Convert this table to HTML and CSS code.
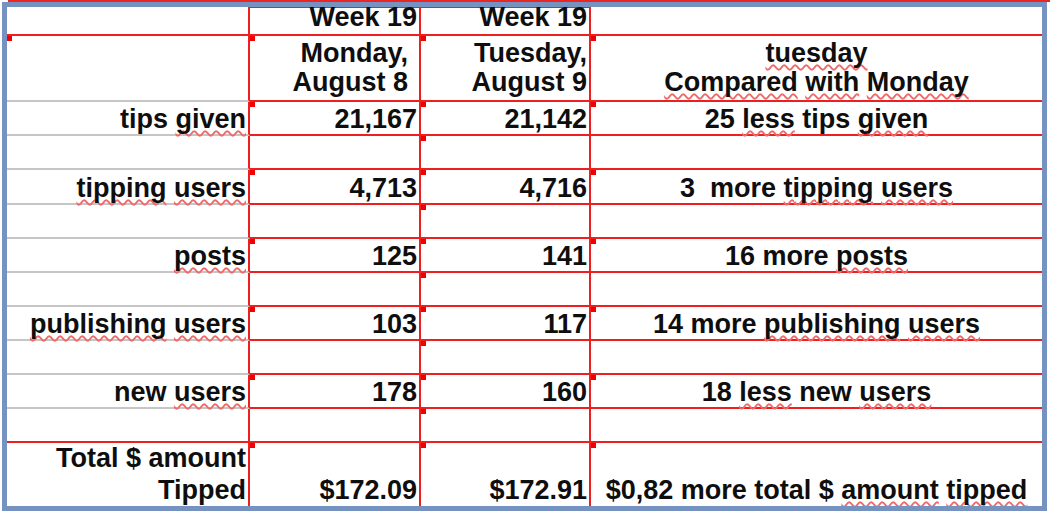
FILE: index.html
```html
<!DOCTYPE html>
<html>
<head>
<meta charset="utf-8">
<link rel="stylesheet" href="styles.css">
</head>
<body>
<div class="top-edge"></div>
<div class="frame">
  <div class="grid">
    <!-- row 1 -->
    <div class="c a red r1"></div>
    <div class="c t r1">Week 19</div>
    <div class="c t r1">Week 19</div>
    <div class="c d r1"></div>
    <!-- row 2 -->
    <div class="c a m r2"></div>
    <div class="c m r2 trail">Monday,<br>August 8</div>
    <div class="c m r2">Tuesday,<br>August 9</div>
    <div class="c d m r2"><span class="sp">tuesday</span><span><span class="sp">Compared</span> <span class="sp">with</span> <span class="sp">Monday</span></span></div>
    <!-- row 3 -->
    <div class="c a"><span>tips <span class="sp">given</span></span></div>
    <div class="c m">21,167</div>
    <div class="c m">21,142</div>
    <div class="c d m"><span>25 <span class="sp">less</span> tips <span class="sp">given</span></span></div>
    <!-- row 4 -->
    <div class="c a"></div>
    <div class="c"></div>
    <div class="c m"></div>
    <div class="c d"></div>
    <!-- row 5 -->
    <div class="c a"><span><span class="sp">tipping</span> <span class="sp">users</span></span></div>
    <div class="c m">4,713</div>
    <div class="c m">4,716</div>
    <div class="c d m"><span>3&nbsp; more <span class="sp">tipping</span> <span class="sp">users</span></span></div>
    <!-- row 6 -->
    <div class="c a"></div>
    <div class="c"></div>
    <div class="c m"></div>
    <div class="c d"></div>
    <!-- row 7 -->
    <div class="c a"><span class="sp">posts</span></div>
    <div class="c m">125</div>
    <div class="c m">141</div>
    <div class="c d m"><span>16 more <span class="sp">posts</span></span></div>
    <!-- row 8 -->
    <div class="c a"></div>
    <div class="c"></div>
    <div class="c m"></div>
    <div class="c d"></div>
    <!-- row 9 -->
    <div class="c a"><span><span class="sp">publishing</span> <span class="sp">users</span></span></div>
    <div class="c m">103</div>
    <div class="c m">117</div>
    <div class="c d m"><span>14 more <span class="sp">publishing</span> <span class="sp">users</span></span></div>
    <!-- row 10 -->
    <div class="c a"></div>
    <div class="c"></div>
    <div class="c m"></div>
    <div class="c d"></div>
    <!-- row 11 -->
    <div class="c a"><span>new <span class="sp">users</span></span></div>
    <div class="c m">178</div>
    <div class="c m">160</div>
    <div class="c d m"><span>18 <span class="sp">less</span> new <span class="sp">users</span></span></div>
    <!-- row 12 -->
    <div class="c a red"></div>
    <div class="c"></div>
    <div class="c m"></div>
    <div class="c d"></div>
    <!-- row 13 -->
    <div class="c a red last"><span>Total $ amount</span><span>Tipped</span></div>
    <div class="c m last">$172.09</div>
    <div class="c m last">$172.91</div>
    <div class="c d m last"><span>$0,82 more total $ <span class="sp">amount</span> <span class="sp">tipped</span></span></div>
  </div>
</div>
</body>
</html>
```

FILE: styles.css
```css
html, body {
  margin: 0;
  padding: 0;
  background: #ffffff;
}

body {
  font-family: "Liberation Sans", Arial, sans-serif;
  width: 1050px;
  height: 511px;
  overflow: hidden;
}

.top-edge {
  height: 2px;
  margin-left: 8px;
  background: #ec2424;
}

.frame {
  margin-left: 2px;
  width: 1035px;
  height: 499px;
  border: 5px solid #7592c0;
  overflow: hidden;
}

.grid {
  display: grid;
  grid-template-columns: 243px 171px 170px 451px;
  grid-template-rows: 29px 66px 34px 34px 35px 34px 34px 34px 34px 34px 34px 34px 68px;
}

.c {
  position: relative;
  box-sizing: border-box;
  display: flex;
  flex-direction: column;
  justify-content: flex-end;
  align-items: flex-end;
  text-align: right;
  padding: 0 2px 0 0;
  border-right: 2px solid #ee1f1f;
  border-bottom: 2px solid #ee1f1f;
  font-size: 27px;
  font-weight: bold;
  line-height: 29px;
  color: #0e0e0e;
  white-space: nowrap;
}

.r1 {
  padding-bottom: 2px;
}

.r2 {
  padding-bottom: 3px;
}

.trail {
  padding-right: 11px;
}

.a {
  border-bottom-color: #c6c6c6;
}

.a.red {
  border-bottom-color: #ee1f1f;
}

.t {
  box-shadow: inset 0 1px 0 #ee1f1f;
}

.d {
  align-items: center;
  text-align: center;
  border-right: none;
  padding-right: 0;
}

.last {
  line-height: 32px;
  padding-bottom: 3px;
}

.m::before {
  content: "";
  position: absolute;
  left: 0;
  top: 0;
  width: 5px;
  height: 5px;
  background: #f00000;
}

.sp {
  text-decoration: underline wavy #ee6a6a;
  text-decoration-skip-ink: none;
  text-decoration-thickness: 1.5px;
  text-underline-offset: 2px;
}
```
